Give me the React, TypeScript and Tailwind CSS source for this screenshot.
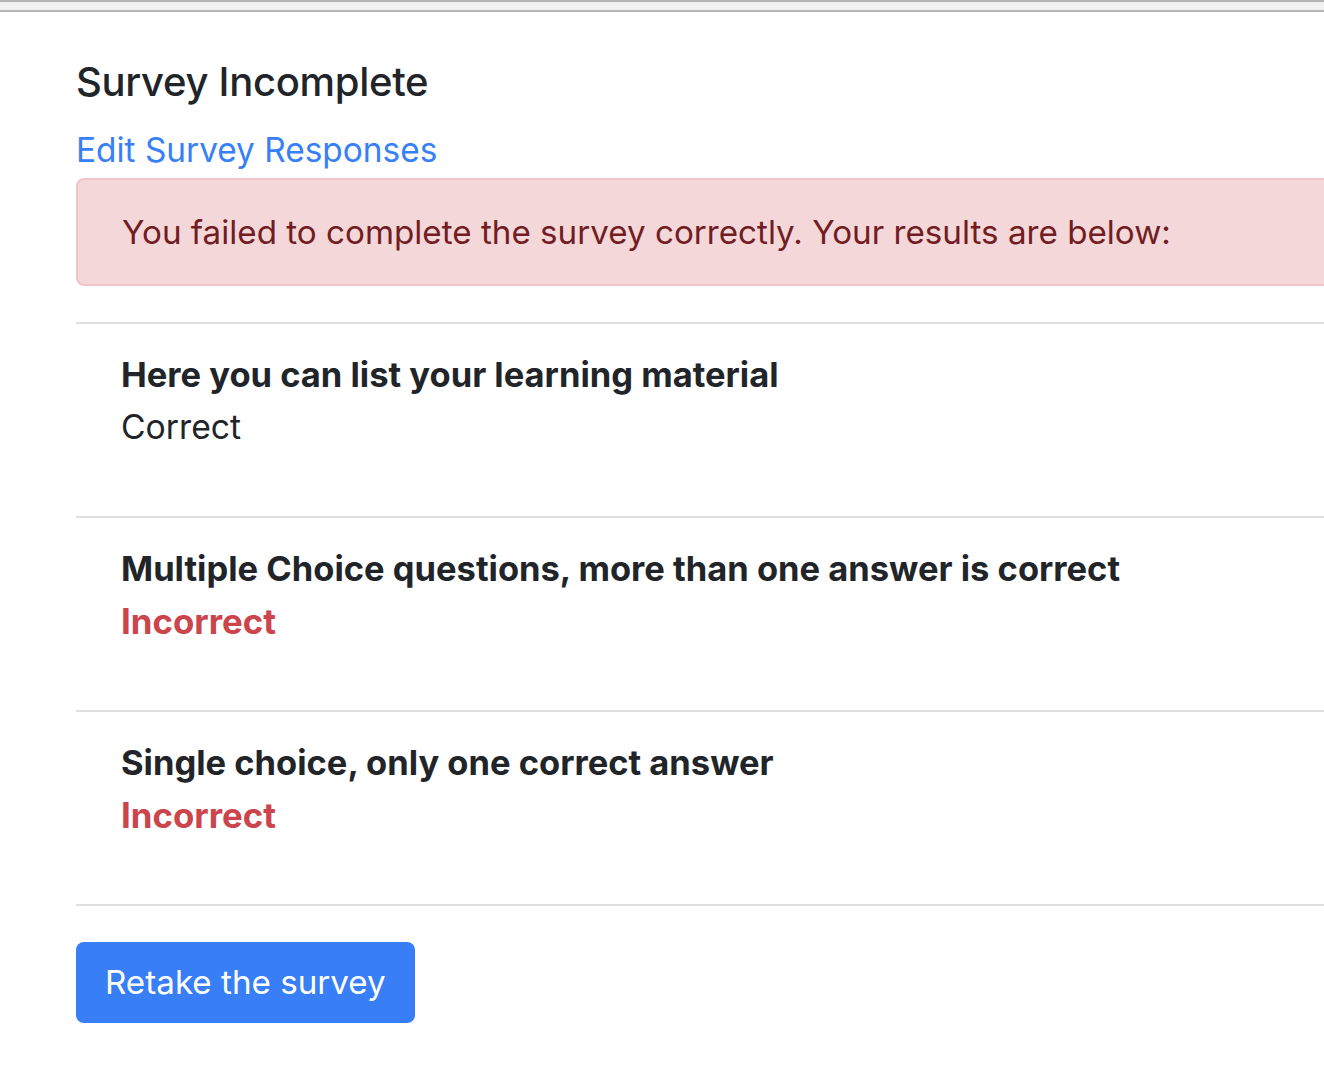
export default function App() {
    const results = [
        { question: "Here you can list your learning material", correct: true },
        { question: "Multiple Choice questions, more than one answer is correct", correct: false },
        { question: "Single choice, only one correct answer", correct: false },
    ];

    return (
        <div className="min-h-screen overflow-hidden bg-white font-['Inter',sans-serif] text-[#212529]">
            {/* browser chrome strip */}
            <div className="h-[12px] border-y-2 border-[#b3b3b3] bg-[#f1f1f1]" />

            <main className="ml-[76px] w-[1300px] pt-[46px]">
                <h2 className="text-[40px] leading-[48px] font-medium tracking-[-0.3px]">Survey Incomplete</h2>

                <a href="#" className="mt-[22px] block text-[33.4px] leading-[44px] text-[#3880f7]">
                    Edit Survey Responses
                </a>

                <div className="mt-[6px] rounded-[8px] border-2 border-[#eec6c9] bg-[#f3d7d9] py-[28px] pr-[46px] pl-[44px] text-[33.2px] leading-[48px] text-[#721c24]">
                    You failed to complete the survey correctly. Your results are below:
                </div>

                <ul className="mt-[36px] border-t-2 border-[#e0e0e0]">
                    {results.map((r) => (
                        <li key={r.question} className="h-[194px] border-b-2 border-[#e0e0e0] px-[45px] pt-[25px]">
                            <div className="text-[34.5px] leading-[52px] font-bold">{r.question}</div>
                            <div
                                className={
                                    r.correct
                                        ? "text-[33.7px] leading-[52px]"
                                        : "text-[34.8px] leading-[52px] font-bold text-[#cc444c]"
                                }
                            >
                                {r.correct ? "Correct" : "Incorrect"}
                            </div>
                        </li>
                    ))}
                </ul>

                <button
                    type="button"
                    className="mt-[36px] h-[81px] rounded-[8px] bg-[#377ef7] px-[29px] text-[33.2px] text-white"
                >
                    Retake the survey
                </button>
            </main>
        </div>
    );
}
